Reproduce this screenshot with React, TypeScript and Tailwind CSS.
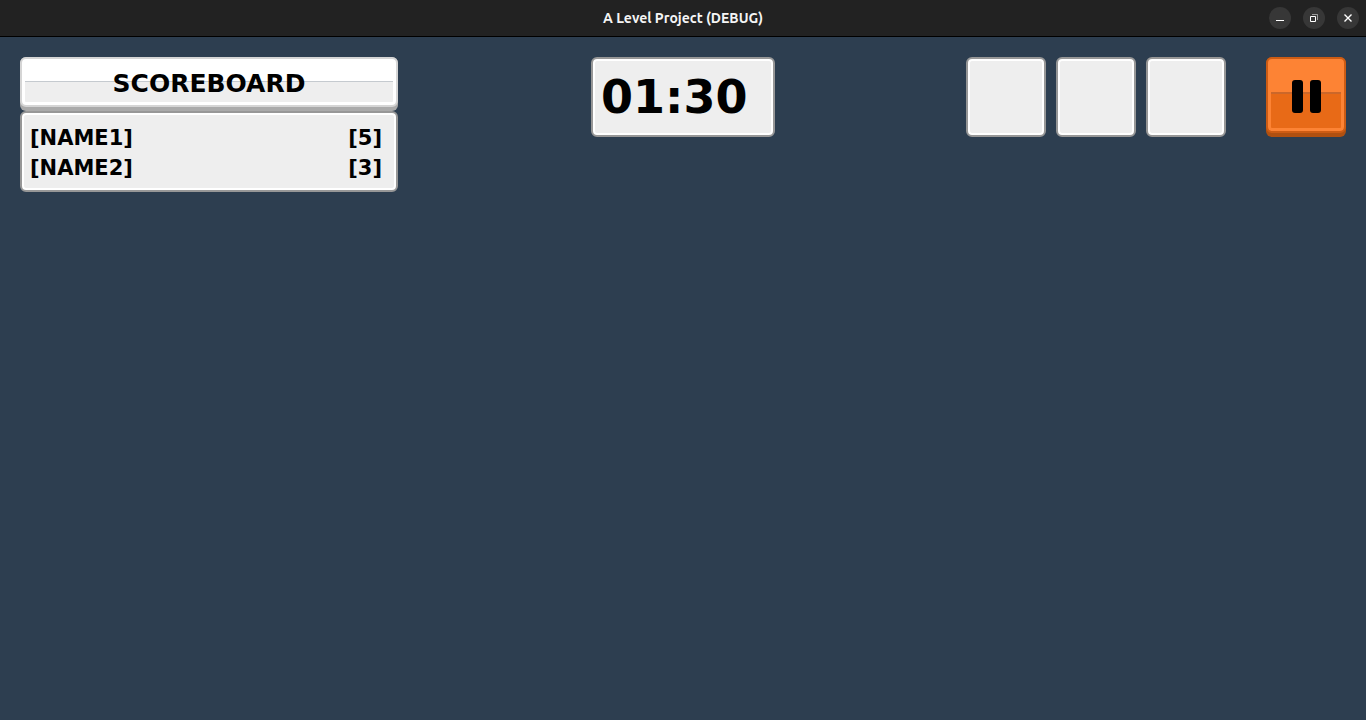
import React from "react";

const scores = [
  { name: "[NAME1]", score: "[5]" },
  { name: "[NAME2]", score: "[3]" },
];

const panel =
  "rounded-md border-2 border-[#979797] bg-[#eeeeee] shadow-[inset_0_0_0_2px_#ffffff]";

const windowButton =
  "flex size-[22px] items-center justify-center rounded-full bg-[#373737] text-white";

function TitleBar() {
  return (
    <header className="grid h-[37px] grid-cols-[1fr_auto_1fr] items-center border-b border-black bg-[#222222] px-[7px]">
      <span />
      <h1 className="font-['Ubuntu','Noto_Sans',sans-serif] text-sm font-bold text-[#f5f5f5]">
        A Level Project (DEBUG)
      </h1>
      <div className="flex justify-end gap-3">
        <button type="button" aria-label="Minimize" className={windowButton}>
          <svg width="8" height="8" viewBox="0 0 8 8" shapeRendering="crispEdges">
            <path d="M0 6h8v1H0z" fill="currentColor" />
          </svg>
        </button>
        <button type="button" aria-label="Restore" className={windowButton}>
          <svg width="8" height="8" viewBox="0 0 8 8" fill="none" stroke="currentColor">
            <path d="M.5 2.5h5v5h-5z" />
            <path d="M2 .5h5.5V6" opacity=".5" />
          </svg>
        </button>
        <button type="button" aria-label="Close" className={windowButton}>
          <svg width="8" height="8" viewBox="0 0 8 8" stroke="currentColor" strokeWidth="1.4">
            <path d="M.5.5l7 7M7.5.5l-7 7" />
          </svg>
        </button>
      </div>
    </header>
  );
}

function Scoreboard() {
  return (
    <section className="w-[378px]">
      <h2 className="rounded-md bg-[#aaaaaa] pb-1">
        <span className="flex h-[50px] items-center justify-center rounded-md border-2 border-[#d5d5d5] bg-[linear-gradient(#ffffff_22px,#c5cacf_22px,#c5cacf_23px,#eeeeee_23px)] pt-1 text-[25px] leading-6 font-bold shadow-[inset_0_0_0_3px_#ffffff]">
          SCOREBOARD
        </span>
      </h2>
      <div className={`${panel} px-2 pt-2.5 pb-[7px]`}>
        <table className="w-full text-[21px] leading-[30px] font-bold">
          <tbody>
            {scores.map((row) => (
              <tr key={row.name}>
                <td className="p-0">{row.name}</td>
                <td className="p-0 pr-1.5 text-right">{row.score}</td>
              </tr>
            ))}
          </tbody>
        </table>
      </div>
    </section>
  );
}

export default function App() {
  return (
    <div className="flex min-h-screen flex-col bg-[#2d3e50] font-['DejaVu_Sans',sans-serif] text-black">
      <TitleBar />
      <main className="grid grid-cols-[1fr_auto_1fr] items-start p-5">
        <Scoreboard />
        <div className={`${panel} flex h-20 w-46 items-center px-2`}>
          <time className="text-[46px] leading-none font-bold">01:30</time>
        </div>
        <div className="flex justify-end gap-10">
          <div className="flex gap-2.5">
            <div className={`${panel} size-20`} />
            <div className={`${panel} size-20`} />
            <div className={`${panel} size-20`} />
          </div>
          <button
            type="button"
            aria-label="Pause"
            className="size-20 rounded-md bg-[#b05010] pb-1"
          >
            <span className="flex h-[76px] items-center justify-center rounded-md border-2 border-[#cd5c14] bg-[linear-gradient(#fd8334_33px,#cb672a_33px,#cb672a_35px,#e86a17_35px)] pt-1 shadow-[inset_0_0_0_3px_#fd8334]">
              <svg width="30" height="34" viewBox="0 0 30 34">
                <rect x="1" y="0" width="11" height="33" rx="3" />
                <rect x="19" y="0" width="11" height="33" rx="3" />
              </svg>
            </span>
          </button>
        </div>
      </main>
    </div>
  );
}
